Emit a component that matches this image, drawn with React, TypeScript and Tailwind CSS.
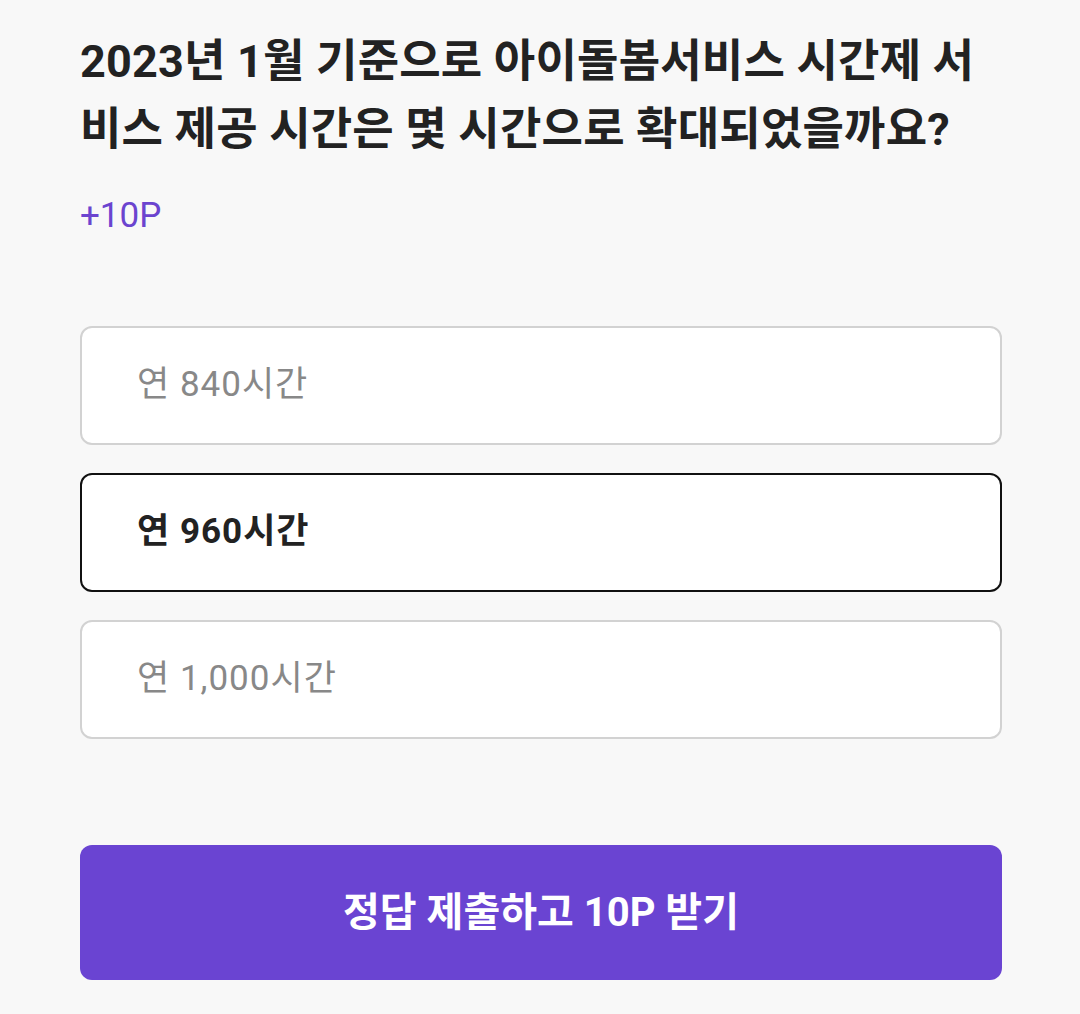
import React, { useState } from 'react';

const options = ['연 840시간', '연 960시간', '연 1,000시간'];

const App: React.FC = () => {
  const [selected, setSelected] = useState(1);

  return (
    <div
      className="min-h-[1014px] w-full bg-[#f8f8f8] pl-20 pr-[78px] pt-[28px] pb-[34px] flex flex-col"
      style={{ fontFamily: 'Roboto, "Noto Sans CJK KR", sans-serif' }}
    >
      {/* 문제 */}
      <h1 className="text-[45px] font-bold leading-[68px] text-[#222] tracking-[0.2px] break-all pr-5">
        2023년 1월 기준으로 아이돌봄서비스 시간제 서비스 제공 시간은 몇 시간으로 확대되었을까요?
      </h1>
      <p className="mt-[32px] text-[35px] leading-[40px] text-[#6b44cf]">+10P</p>

      {/* 보기 */}
      <div className="mt-[90px] flex flex-col gap-[28px]">
        {options.map((opt, i) => (
          <button
            key={opt}
            onClick={() => setSelected(i)}
            className={`h-[119px] w-full rounded-xl bg-white px-[55px] text-left text-[35px] tracking-[1px] ${
              selected === i
                ? 'border-2 border-[#111] font-bold text-[#222]'
                : 'border-2 border-[#d2d2d2] text-[#888]'
            }`}
          >
            {opt}
          </button>
        ))}
      </div>

      {/* 제출 */}
      <button className="mt-[106px] h-[135px] w-full rounded-xl bg-[#6a44d2] text-[40px] font-bold text-white">
        정답 제출하고 10P 받기
      </button>
    </div>
  );
};

export default App;
